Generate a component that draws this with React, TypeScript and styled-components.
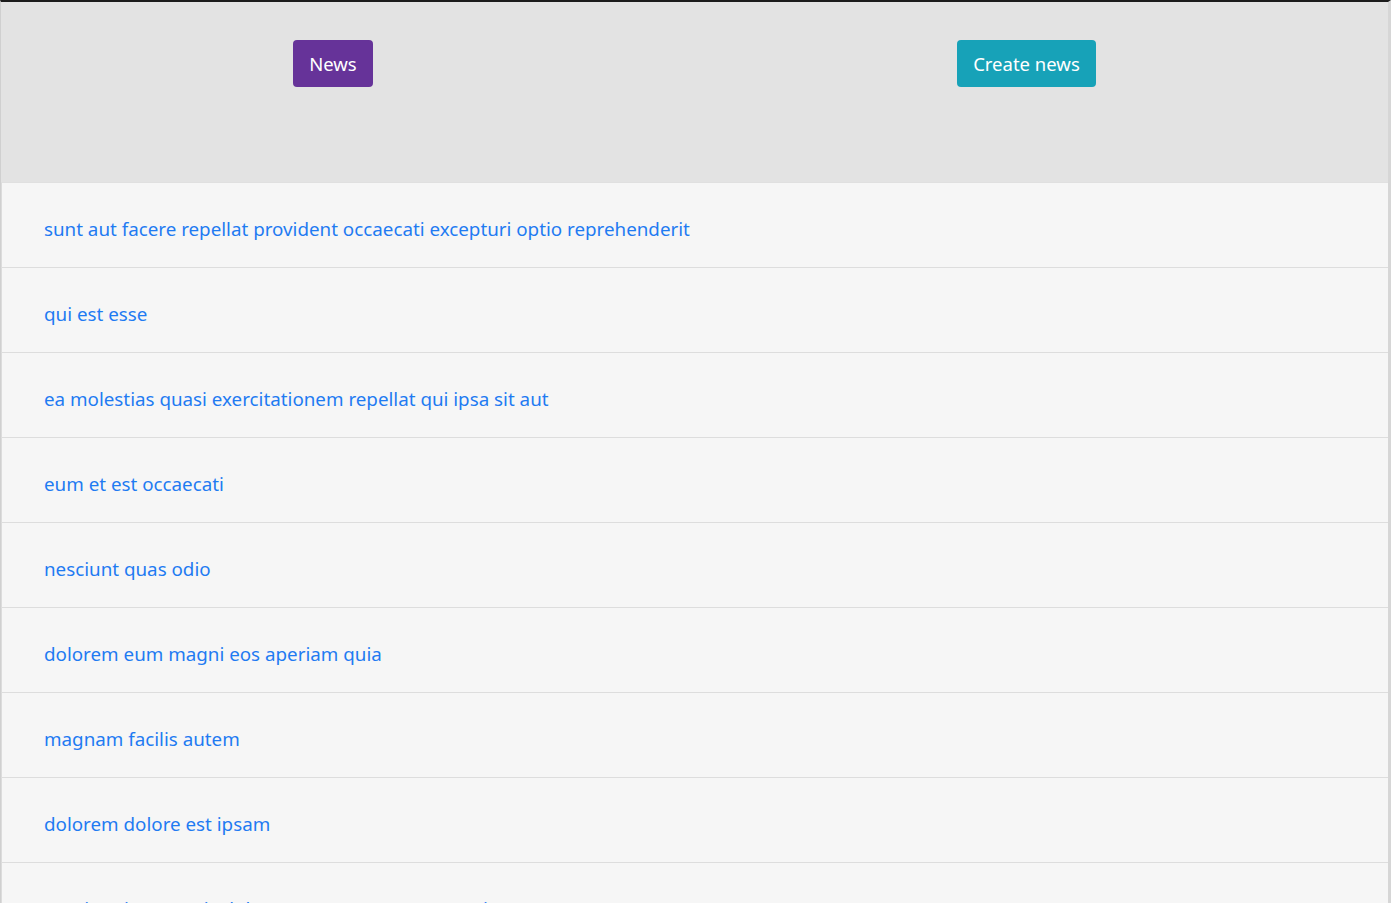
import React from "react";
import styled, { createGlobalStyle } from "styled-components";

const Global = createGlobalStyle`
  html, body { margin: 0; padding: 0; background: #f6f6f6; }
  body { font-family: "Noto Sans", "Open Sans", sans-serif; }
  * { box-sizing: border-box; }
`;

const Frame = styled.div`
  border-top: 2px solid #1c1c1c;
  border-left: 1px solid #d0d0d0;
  border-right: 3px solid #d6d6d6;
  min-height: 903px;
  background: #f6f6f6;
`;

const Header = styled.header`
  height: 180px;
  background: #e3e3e3;
  display: flex;
  justify-content: space-around;
  align-items: flex-start;
  padding-top: 38px;
`;

const NavButton = styled.a<{ $color: string }>`
  display: inline-flex;
  align-items: center;
  justify-content: center;
  height: 47px;
  padding: 0 16px;
  border-radius: 4px;
  background: ${(p) => p.$color};
  color: #ffffff;
  font-size: 18.5px;
  text-decoration: none;
  cursor: pointer;
`;

const List = styled.ul`
  list-style: none;
  margin: 0;
  padding: 0;
  border-left: 1px solid #dcdcdc;
  border-top: 1px solid #e0e0e0;
`;

const Row = styled.li`
  height: 85px;
  display: flex;
  align-items: center;
  padding: 8px 0 0 42px;
  border-bottom: 1px solid #dddddd;
  background: #f6f6f6;
`;

const Link = styled.a`
  color: #1f7bf2;
  font-size: 18.8px;
  text-decoration: none;
  cursor: pointer;
`;

const titles = [
  "sunt aut facere repellat provident occaecati excepturi optio reprehenderit",
  "qui est esse",
  "ea molestias quasi exercitationem repellat qui ipsa sit aut",
  "eum et est occaecati",
  "nesciunt quas odio",
  "dolorem eum magni eos aperiam quia",
  "magnam facilis autem",
  "dolorem dolore est ipsam",
  "nesciunt iure omnis dolorem tempora et accusantium",
  "optio molestias id quia eum",
];

export default function App() {
  return (
    <>
      <Global />
      <Frame>
        <Header>
          <NavButton $color="#663399">News</NavButton>
          <NavButton $color="#17a2b8">Create news</NavButton>
        </Header>
        <List>
          {titles.map((t) => (
            <Row key={t}>
              <Link>{t}</Link>
            </Row>
          ))}
        </List>
      </Frame>
    </>
  );
}
